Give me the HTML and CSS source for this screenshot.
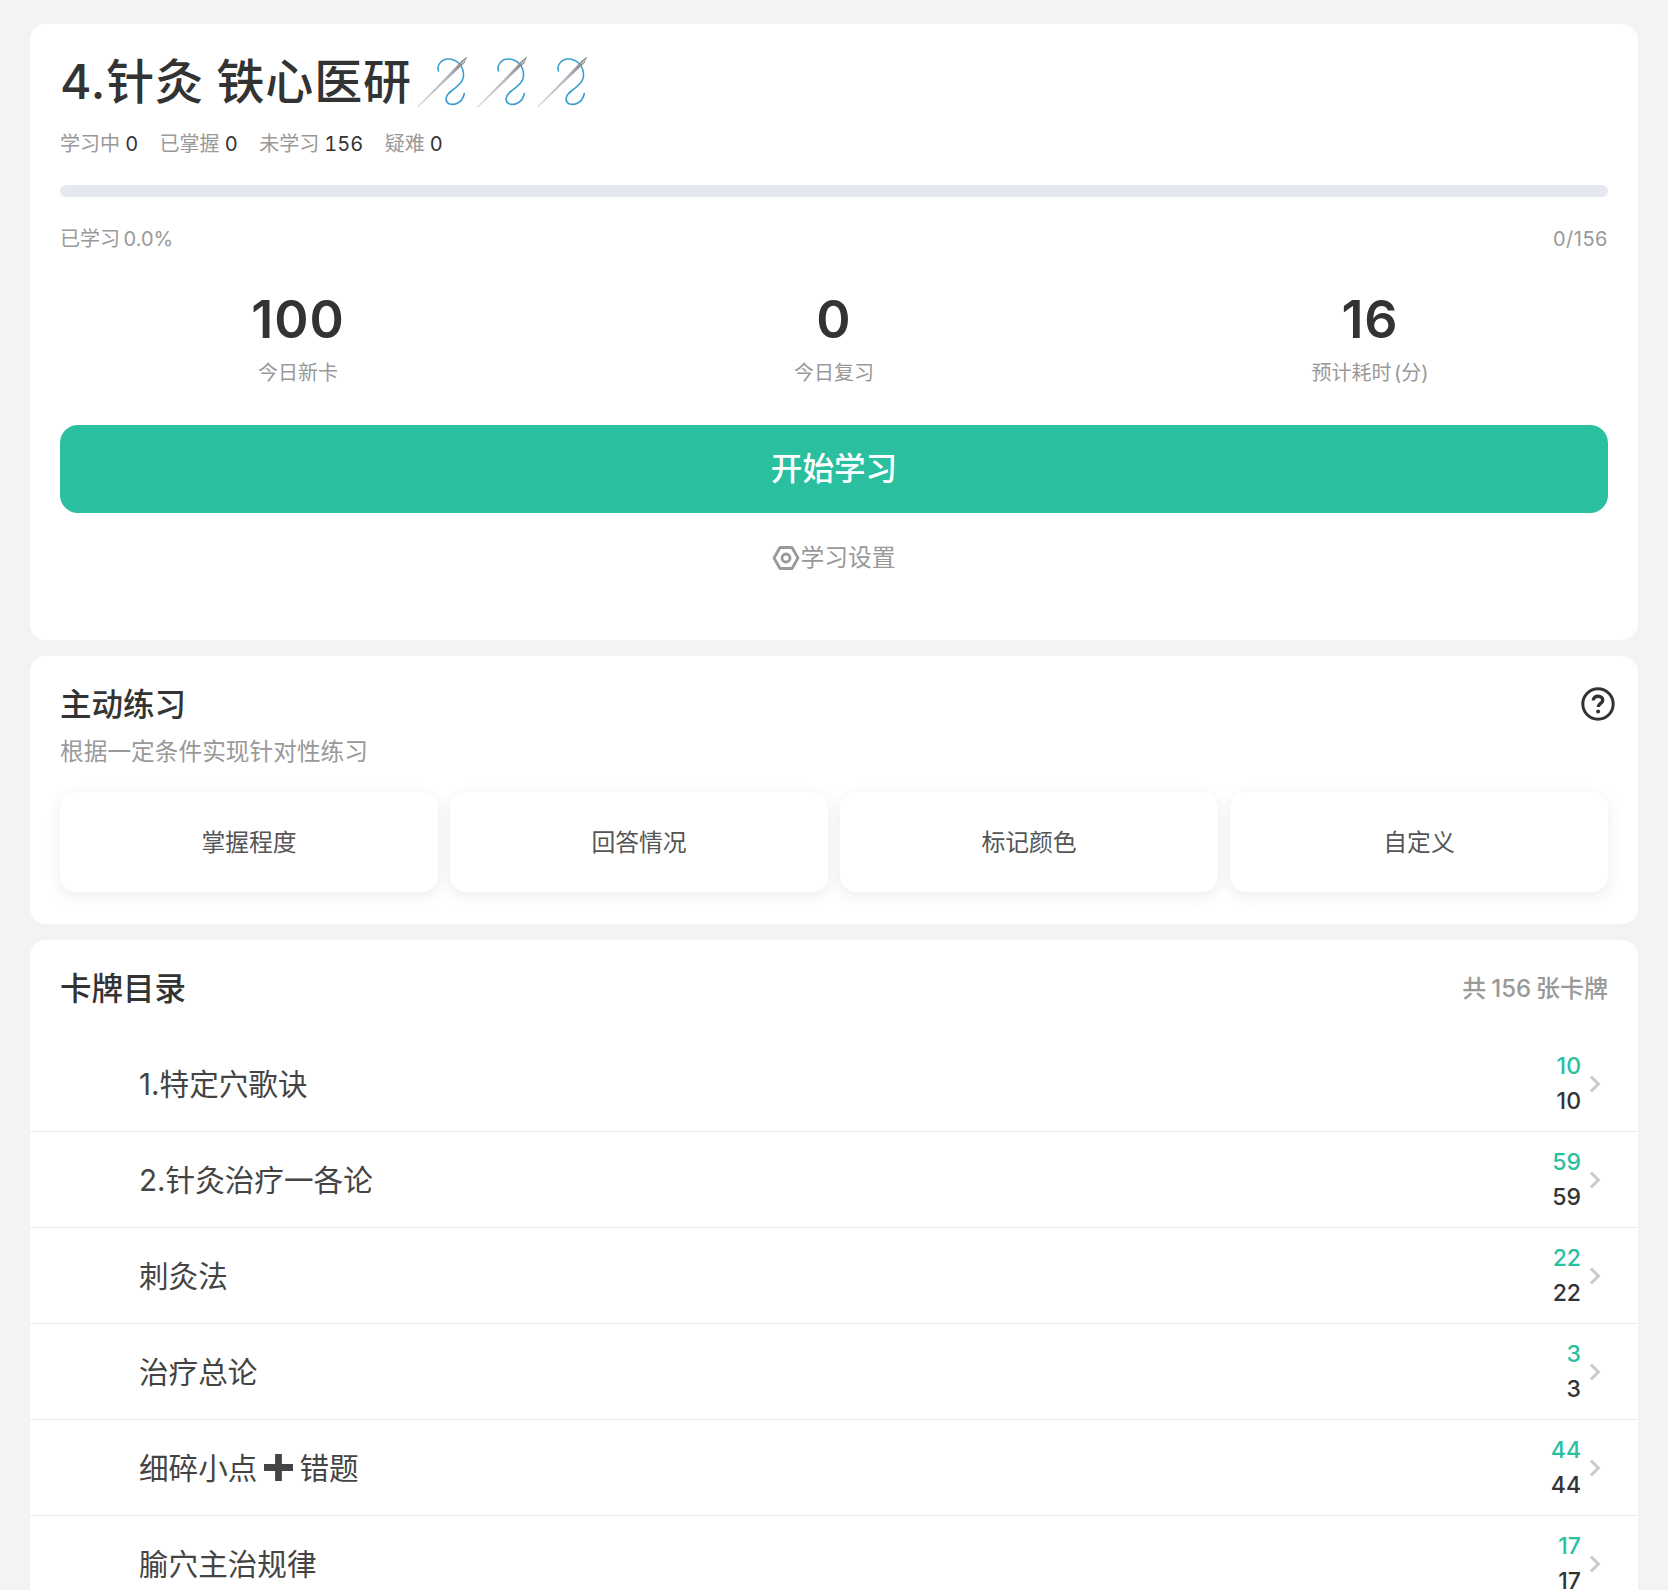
FILE: index.html
```html
<!DOCTYPE html>
<html lang="zh-CN">
<head>
<meta charset="utf-8">
<title>4.针灸 铁心医研</title>
<link rel="stylesheet" href="styles.css">
</head>
<body>
<svg class="defs" width="0" height="0" aria-hidden="true">
  <defs>
    <linearGradient id="steel" x1="0" y1="1" x2="1" y2="0">
      <stop offset="0" stop-color="#d8d8dd"/>
      <stop offset="0.6" stop-color="#b4b5be"/>
      <stop offset="1" stop-color="#77777f"/>
    </linearGradient>
    <symbol id="needle" viewBox="0 0 60 60" overflow="visible">
      <path d="M28.500 26C26.500 21 31 14 38 14C47 14 54 21 53.500 31C53 38 47 41 42 45.500C36 50 34 55 38.500 58.500C44 61 52.500 58 54.300 48.500" fill="none" stroke="#3a9fd0" stroke-width="1.600" stroke-linecap="round"/>
      <path d="M7 62L52 15.500L57 11.500L54.500 18L8 62.500Z" fill="url(#steel)"/>
      <path d="M51.500 19L55 14.500" stroke="#fff" stroke-width=".8"/>
    </symbol>
  </defs>
</svg>
<main class="page">
  <section class="card hero">
    <div class="title-row">
      <h1 class="title">4.针灸 铁心医研</h1>
      <svg class="needle" aria-label="needle"><use href="#needle"/></svg>
      <svg class="needle" aria-label="needle"><use href="#needle"/></svg>
      <svg class="needle" aria-label="needle"><use href="#needle"/></svg>
    </div>
    <div class="counts">
      <span class="count">学习中 <b>0</b></span>
      <span class="count">已掌握 <b>0</b></span>
      <span class="count">未学习 <b>156</b></span>
      <span class="count">疑难 <b>0</b></span>
    </div>
    <div class="bar"></div>
    <div class="bar-meta"><span>已学习 0.0%</span><span class="bar-total">0/156</span></div>
    <div class="stats">
      <div class="stat"><div class="stat-num">100</div><div class="stat-label">今日新卡</div></div>
      <div class="stat"><div class="stat-num">0</div><div class="stat-label">今日复习</div></div>
      <div class="stat"><div class="stat-num">16</div><div class="stat-label">预计耗时 (分)</div></div>
    </div>
    <button class="start">开始学习</button>
    <div class="settings">
      <svg class="hex" viewBox="0 0 28 28" aria-hidden="true">
        <path d="M8 3.500H20L26 14L20 24.500H8L2 14Z" fill="none" stroke="#999" stroke-width="2.800" stroke-linejoin="round"/>
        <circle cx="14" cy="14" r="4" fill="none" stroke="#999" stroke-width="2.800"/>
      </svg>
      <span>学习设置</span>
    </div>
  </section>

  <section class="card practice">
    <svg class="help" viewBox="0 0 34 34" aria-hidden="true">
      <circle cx="17" cy="17" r="15.200" fill="none" stroke="#333" stroke-width="3"/>
      <path d="M12.300 13.400C12.300 10.700 14.400 9.200 17 9.200C19.700 9.200 21.700 10.900 21.700 13.200C21.700 16.300 17.200 16.500 17.200 20" fill="none" stroke="#333" stroke-width="3.400"/>
      <circle cx="17.100" cy="24.500" r="2" fill="#333"/>
    </svg>
    <h2 class="section-title">主动练习</h2>
    <p class="section-sub">根据一定条件实现针对性练习</p>
    <div class="tiles">
      <div class="tile">掌握程度</div>
      <div class="tile">回答情况</div>
      <div class="tile">标记颜色</div>
      <div class="tile">自定义</div>
    </div>
  </section>

  <section class="card deck">
    <div class="deck-head">
      <h2 class="section-title">卡牌目录</h2>
      <span class="deck-total">共 156 张卡牌</span>
    </div>
    <ul class="rows">
      <li class="row"><span class="row-name">1.特定穴歌诀</span><span class="nums"><span class="num-new">10</span><span class="num-all">10</span></span><span class="chev"></span></li>
      <li class="row"><span class="row-name">2.针灸治疗一各论</span><span class="nums"><span class="num-new">59</span><span class="num-all">59</span></span><span class="chev"></span></li>
      <li class="row"><span class="row-name">刺灸法</span><span class="nums"><span class="num-new">22</span><span class="num-all">22</span></span><span class="chev"></span></li>
      <li class="row"><span class="row-name">治疗总论</span><span class="nums"><span class="num-new">3</span><span class="num-all">3</span></span><span class="chev"></span></li>
      <li class="row"><span class="row-name">细碎小点<svg class="plus" viewBox="0 0 30 30" aria-label="加"><path d="M11.500 1H18.500V11.500H30V18.500H18.500V29H11.500V18.500H0V11.500H11.500Z" fill="#444"/></svg>错题</span><span class="nums"><span class="num-new">44</span><span class="num-all">44</span></span><span class="chev"></span></li>
      <li class="row"><span class="row-name">腧穴主治规律</span><span class="nums"><span class="num-new">17</span><span class="num-all">17</span></span><span class="chev"></span></li>
    </ul>
  </section>
</main>
</body>
</html>
```
FILE: styles.css
```css
* { box-sizing: border-box; }
html, body { margin: 0; padding: 0; height: 1590px; overflow: hidden; }
body {
  background: #f2f3f5;
  color: #333;
  font-family: Inter, "Noto Sans CJK SC", "Noto Sans", sans-serif;
}
.defs { position: absolute; }
.page { display: flex; flex-direction: column; gap: 16px; padding: 24px 30px 0; }
.card { background: #fff; border-radius: 16px; }

.hero { height: 616px; padding: 0 30px; }
.title-row { display: flex; align-items: flex-start; height: 84px; padding-top: 28px; }
.title { margin: 0; font-size: 48px; line-height: 60px; font-weight: 500; white-space: nowrap; letter-spacing: .85px; word-spacing: -1px; }
.needle { width: 60px; height: 60px; flex: none; margin-top: -7px; overflow: visible; }
.needle:first-of-type { margin-left: -2px; }
.counts { display: flex; gap: 21.500px; height: 30px; margin-top: 21px; font-size: 20px; line-height: 30px; color: #999; word-spacing: -.5px; }
.count b { font-weight: 400; font-size: 20px; color: #333; font-variant-numeric: tabular-nums; }
.bar { height: 12px; margin-top: 26px; border-radius: 6px; background: #e6e8f1; }
.bar-meta { display: flex; justify-content: space-between; margin-top: 27px; font-size: 20px; line-height: 30px; color: #999; word-spacing: -2px; }
.bar-total { letter-spacing: .5px; }
.stats { display: grid; grid-template-columns: repeat(3, 1fr); margin: 32px -30px 0; text-align: center; }
.stat-num { font-size: 52px; line-height: 68px; font-weight: 600; letter-spacing: 1px; }
.stat-label { margin-top: 4px; font-size: 20px; line-height: 30px; color: #999; word-spacing: -3px; }
.start {
  display: block; width: 100%; height: 88px; margin-top: 37px; border: 0; border-radius: 18px;
  background: #2ac09f; color: #fff; font: 500 31.600px/86px Inter, "Noto Sans CJK SC", sans-serif;
}
.settings { display: flex; justify-content: center; align-items: center; height: 36px; margin-top: 27px; font-size: 23.800px; line-height: 36px; color: #999; }
.hex { width: 28px; height: 28px; flex: none; }

.practice { position: relative; height: 268px; padding: 29px 30px 0; }
.help { position: absolute; top: 31px; right: 23px; width: 34px; height: 34px; }
.section-title { margin: 0; font-size: 31.500px; line-height: 40px; font-weight: 500; }
.section-sub { margin: 9px 0 0; font-size: 23.700px; line-height: 36px; color: #999; }
.tiles { display: grid; grid-template-columns: repeat(4, 1fr); gap: 12px; margin-top: 22px; }
.tile {
  display: flex; align-items: center; justify-content: center; height: 100px; padding-bottom: 4px; border-radius: 16px;
  background: #fff; font-size: 23.800px; color: #555;
  box-shadow: 0 4px 16px rgba(0, 0, 0, .08);
}

.deck { height: 700px; }
.deck-head { display: flex; justify-content: space-between; align-items: center; padding: 29px 30px 0; }
.deck-total { padding-bottom: 5px; font-size: 24px; font-weight: 500; color: #999; word-spacing: -1.500px; }
.rows { list-style: none; margin: 27px 0 0; padding: 0; }
.row { display: flex; align-items: center; height: 96px; padding: 0 40px 0 109px; border-bottom: 1px solid #ececee; }
.row-name { flex: 1; font-size: 29.600px; line-height: 40px; color: #444; }
.plus { width: 29px; height: 29px; vertical-align: -3px; margin: 0 6px 0 7px; }
.nums { display: flex; flex-direction: column; align-items: flex-end; font-size: 23px; line-height: 35px; font-weight: 500; }
.num-new { color: #2ac09f; }
.num-all { color: #333; }
.chev { width: 12px; height: 12px; margin-left: 5px; border-top: 3px solid #ccc; border-right: 3px solid #ccc; transform: rotate(45deg); }
```
